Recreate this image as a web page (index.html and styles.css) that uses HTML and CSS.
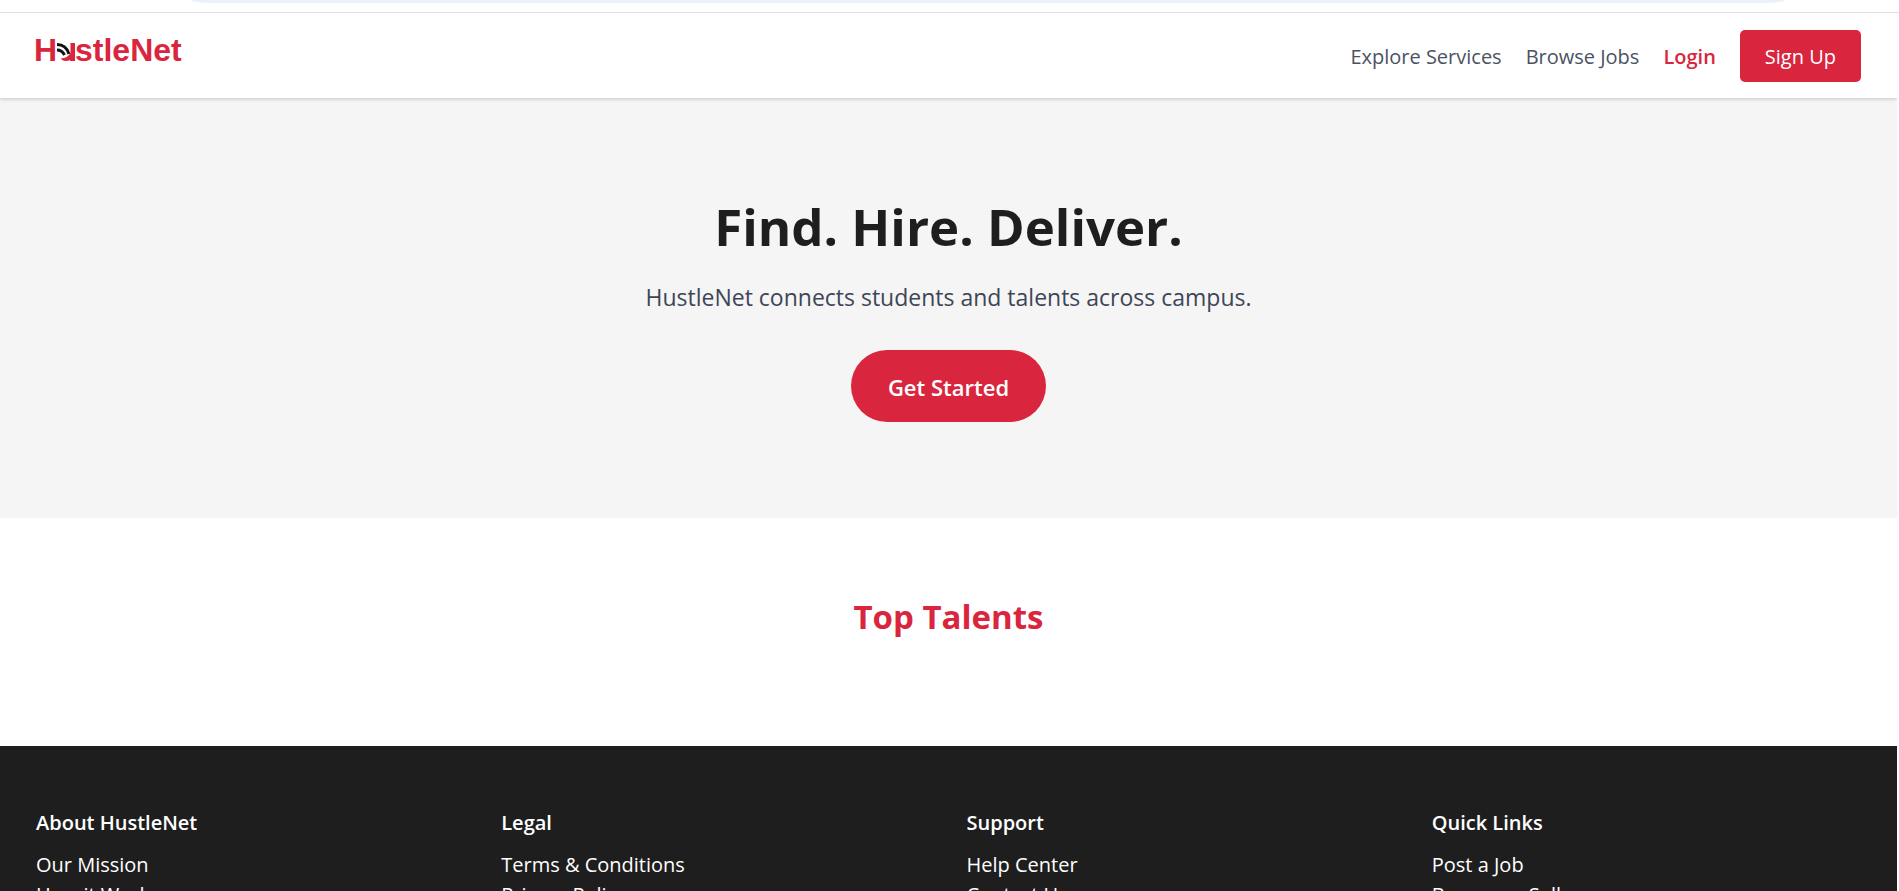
FILE: index.html
```html
<!DOCTYPE html>
<html lang="en">
<head>
<meta charset="utf-8">
<meta name="viewport" content="width=device-width, initial-scale=1">
<title>HustleNet</title>
<link rel="stylesheet" href="styles.css">
</head>
<body>
<div class="browser-bar"><div class="address-bar"></div></div>
<div class="page">
  <header class="header">
    <a class="logo" href="#" aria-label="HustleNet">
      <svg class="logo-art" viewBox="0 0 150 36" role="img" aria-label="HustleNet">
        <g class="logo-text">
          <text x="-2" y="25">H</text>
          <text x="39" y="25">stleNet</text>
        </g>
        <path class="logo-red" d="M34.500 7H39v18h-5v-1q-4 2-8 0l-1-2q6 1 9.500-5z"/>
        <path class="logo-wave" d="M21 8.500q9 0 12 9.500M21 14q5 0 7.500 5"/>
      </svg>
    </a>
    <nav class="nav">
      <a href="#">Explore Services</a>
      <a href="#">Browse Jobs</a>
      <a class="login" href="#">Login</a>
      <a class="signup" href="#">Sign Up</a>
    </nav>
  </header>
  <main>
    <section class="hero">
      <h1>Find. Hire. Deliver.</h1>
      <p>HustleNet connects students and talents across campus.</p>
      <button class="cta" type="button">Get Started</button>
    </section>
    <section class="talents"><h2>Top Talents</h2></section>
  </main>
  <footer class="footer">
    <section><h3>About HustleNet</h3><ul><li><a href="#">Our Mission</a></li><li><a href="#">How it Works</a></li></ul></section>
    <section><h3>Legal</h3><ul><li><a href="#">Terms &amp; Conditions</a></li><li><a href="#">Privacy Policy</a></li></ul></section>
    <section><h3>Support</h3><ul><li><a href="#">Help Center</a></li><li><a href="#">Contact Us</a></li></ul></section>
    <section><h3>Quick Links</h3><ul><li><a href="#">Post a Job</a></li><li><a href="#">Become a Seller</a></li></ul></section>
  </footer>
</div>
</body>
</html>
```
FILE: styles.css
```css
* { box-sizing: border-box; }
body {
  margin: 0;
  height: 100vh;
  display: flex;
  flex-direction: column;
  overflow: hidden;
  background: #fcfcfc;
  font-family: "Open Sans", "Noto Sans", sans-serif;
  font-size: 20px;
  line-height: 30px;
}
h1, h2, h3, p, ul { margin: 0; padding: 0; }
ul { list-style: none; }
a { color: inherit; text-decoration: none; }

.browser-bar {
  flex: none;
  height: 13px;
  padding: 0 115px 0 192px;
  background: #fff;
  border-bottom: 1px solid #dedede;
}
.address-bar { height: 3px; border-radius: 0 0 16px 16px / 0 0 3px 3px; background: #ebf1fb; }

.page { flex: 1; min-height: 0; margin-right: 2px; overflow: hidden; background: #fff; }
.header {
  position: relative;
  display: flex;
  justify-content: space-between;
  align-items: flex-start;
  padding: 17px 36px 16px;
  background: #fff;
  box-shadow: 0 1px 4px rgba(0, 0, 0, 0.2);
}
.logo { display: block; padding-top: 6px; }
.logo-art { display: block; width: 150px; height: 36px; overflow: visible; }
.logo-text { font-family: "Liberation Sans", sans-serif; font-size: 32px; font-weight: 700; fill: #d9263e; }
.logo-red { fill: #d9263e; }
.logo-wave { fill: none; stroke: #111; stroke-width: 3; }

.nav { display: flex; align-items: baseline; gap: 24px; color: #4a5363; }
.nav .login { color: #d9263e; font-weight: 600; }
.nav .signup { padding: 12px 25px 10px; border-radius: 5px; background: #d9263e; color: #fff; font-weight: 500; }

.hero { padding: 93px 24px 96px; background: #f5f5f5; text-align: center; }
.hero h1 { margin-bottom: 20px; font-size: 51px; line-height: 70px; color: #1e1e1e; }
.hero p { margin-bottom: 37px; font-size: 23px; line-height: 32px; color: #3d4657; }
.cta {
  padding: 21px 37px 19px;
  border: 0;
  border-radius: 36px;
  background: #d9263e;
  color: #fff;
  font: 600 22px/32px "Open Sans", "Noto Sans", sans-serif;
}
.talents { padding: 75px 24px 105px; text-align: center; }
.talents h2 { font-size: 33px; line-height: 48px; color: #d9263e; }

.footer {
  display: grid;
  grid-template-columns: repeat(4, 1fr);
  gap: 36px;
  padding: 62px 36px;
  background: #1e1e1e;
  color: #fff;
}
.footer h3 { margin-bottom: 12px; font-size: 20px; font-weight: 600; }
```
